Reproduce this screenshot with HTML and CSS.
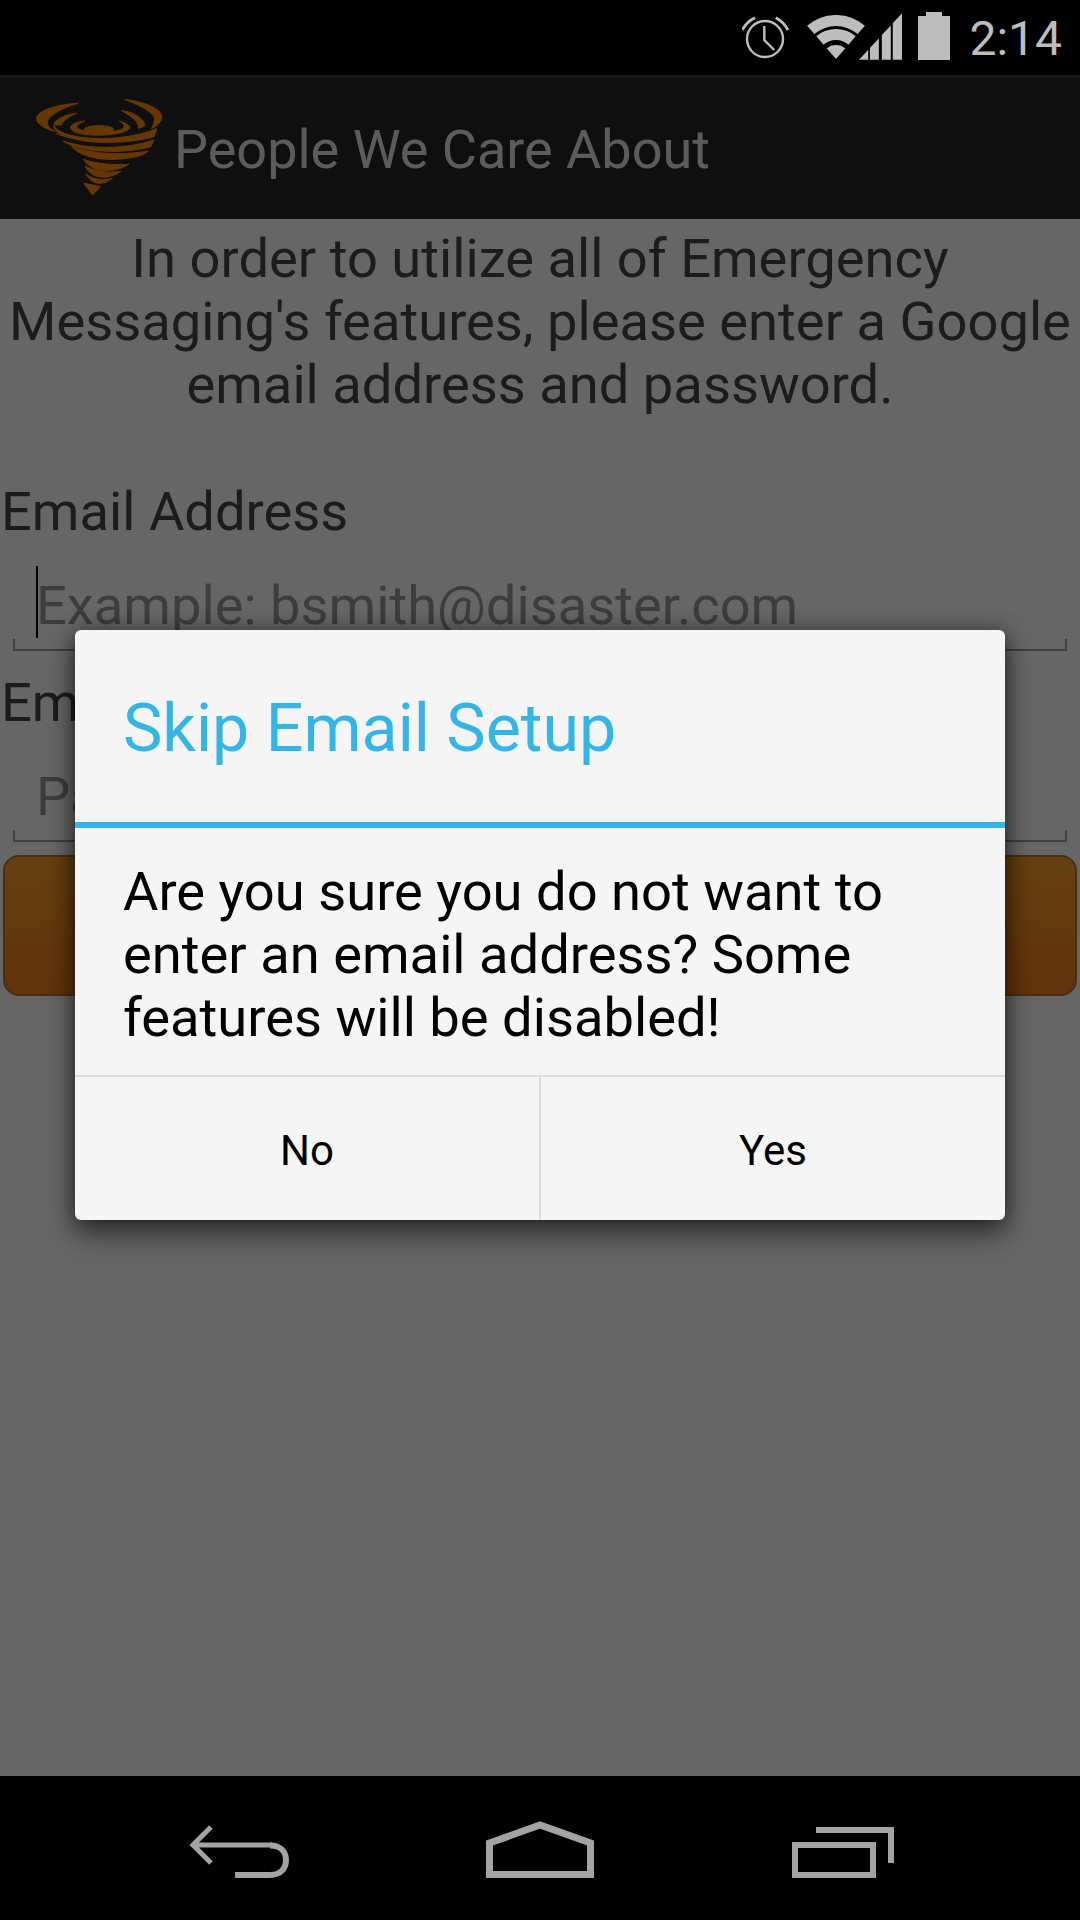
FILE: index.html
```html
<!DOCTYPE html>
<html lang="en">
<head>
<meta charset="utf-8">
<title>People We Care About</title>
<link rel="stylesheet" href="styles.css">
</head>
<body>
<div class="screen">
  <header class="status-bar">
    <svg class="ic-alarm" viewBox="0 0 48 48" width="48" height="48"><circle cx="23" cy="25" r="18" fill="none" stroke="#bdbdbd" stroke-width="2.400"/><path d="M22.300 12V26L32.300 36" fill="none" stroke="#bdbdbd" stroke-width="2.400"/><path d="M0.500 16Q4 8 13 3.700M33.700 3.700Q42 8 46 16" fill="none" stroke="#bdbdbd" stroke-width="2.800"/></svg>
    <svg class="ic-wifi" viewBox="0 0 58 44" width="58" height="44"><path fill="#bdbdbd" d="M.1 10.800A44 44 0 0 1 57.900 10.800L50.600 19.100A33 33 0 0 0 7.400 19.100ZM9.300 21.300A30 30 0 0 1 48.700 21.300L41.500 29.700A19 19 0 0 0 16.500 29.700ZM19.800 33.400A14 14 0 0 1 38.200 33.400L29 44Z"/></svg>
    <svg class="ic-signal" viewBox="0 0 43.300 46.700" width="43" height="47"><path fill="#bdbdbd" d="M0 46.700L9.300 36.700V46.700ZM11 34.900L20 25.200V46.700H11ZM23 21.900L32 12.200V46.700H23ZM34 10L43.300 0V46.700H34Z"/></svg>
    <svg class="ic-battery" viewBox="0 0 32 48" width="32" height="48"><path fill="#bdbdbd" d="M8 0H24V4H32V48H0V4H8Z"/></svg>
    <span class="clock">2:14</span>
  </header>
  <div class="app">
    <div class="action-bar">
      <svg class="logo" viewBox="0 0 420 330" width="140" height="110">
        <g fill="#ff8c00" stroke="#ff8c00" stroke-width="3">
          <path d="M145 40C90 42 22 60 20 85C20 105 50 118 75 125C60 115 52 108 52 98C52 80 90 55 145 40Z"/>
          <path d="M283 28C340 35 395 55 395 80C395 95 385 105 365 115C372 100 376 90 372 82C365 65 330 45 283 28Z"/>
          <path d="M140 70C100 75 72 90 72 105C75 125 130 145 200 145C280 148 345 135 380 115L378 125C330 145 270 150 200 150C130 150 72 130 72 112C72 105 72 105 72 105C72 105 95 105 95 105C95 95 115 80 140 70Z"/>
          <path d="M275 62C310 65 340 85 345 105C340 110 335 112 325 115C328 95 305 80 275 62Z"/>
          <path d="M165 93C135 97 120 105 122 115C125 130 170 137 215 135C260 135 295 125 300 112C298 105 285 98 268 93C280 100 285 108 280 115C265 125 225 128 195 127C165 125 140 118 140 110C142 105 150 98 165 93Z"/>
          <ellipse cx="207" cy="118" rx="44" ry="11"/>
          <path d="M80 130C130 152 260 158 380 118L372 140C300 160 200 162 150 150C125 145 100 140 80 130Z"/>
          <path d="M100 153C170 178 280 180 372 150L362 170C290 190 210 185 170 178C140 172 115 165 100 153Z"/>
          <path d="M125 170C190 195 290 195 355 183C340 200 280 210 230 208C185 205 150 195 125 170Z"/>
          <path d="M160 208C200 222 250 226 297 222C275 238 240 245 210 240C190 237 170 225 160 208Z"/>
          <path d="M165 228C195 245 240 250 273 244C255 258 225 265 205 260C185 255 172 243 165 228Z"/>
          <path d="M168 252C185 265 215 275 247 265C235 275 215 282 205 280C190 278 175 268 168 252Z"/>
          <path d="M162 280L212 290L187 315Z"/>
        </g>
      </svg>
      <span class="app-title">People We Care About</span>
    </div>
    <main class="content">
      <p class="intro">In order to utilize all of Emergency Messaging's features, please enter a Google email address and password.</p>
      <label class="field-label first">Email Address</label>
      <div class="input-line"><span class="caret"></span><span class="hint">Example: bsmith@disaster.com</span></div>
      <label class="field-label">Email Password</label>
      <div class="input-line"><span class="hint">Password</span></div>
      <div class="cta"></div>
    </main>
    <div class="scrim">
      <section class="dialog">
        <h2 class="dialog-title">Skip Email Setup</h2>
        <p class="dialog-body">Are you sure you do not want to enter an email address? Some features will be disabled!</p>
        <div class="dialog-actions">
          <button class="dialog-btn">No</button>
          <button class="dialog-btn">Yes</button>
        </div>
      </section>
    </div>
  </div>
  <nav class="nav-bar">
    <svg class="ic-back" viewBox="0 0 102 54" width="102" height="54"><path fill="none" stroke="#a3a3a3" stroke-width="5" d="M23 2L5 20L23 38M5 20H84"/><path fill="none" stroke="#a3a3a3" stroke-width="6" d="M82 20.500C93 20.500 98 27 98 35C98 43 93 50 82 50H47"/></svg>
    <svg class="ic-home" viewBox="0 0 108 57" width="108" height="57"><path fill="none" stroke="#a3a3a3" stroke-width="7" d="M3.500 22L54 4L104.500 22V53.500H3.500Z"/></svg>
    <svg class="ic-recent" viewBox="0 0 102 51" width="102" height="51"><path fill="none" stroke="#a3a3a3" stroke-width="6" d="M3 18H81V48H3ZM24 3H99V36"/></svg>
  </nav>
</div>
</body>
</html>
```
FILE: styles.css
```css
* { box-sizing: border-box; }
html, body { margin: 0; padding: 0; }
body { font-family: Roboto, "Noto Sans", sans-serif; background: #000; }
.screen { width: 1080px; height: 1920px; display: flex; flex-direction: column; overflow: hidden; }
.status-bar { height: 75px; flex: none; background: #000; display: flex; align-items: center; padding-right: 18px; justify-content: flex-end; }
.ic-alarm { margin-right: 17px; }
.ic-wifi { margin-right: -6px; margin-bottom: 2px; }
.ic-signal { margin-right: 16px; margin-bottom: 3px; }
.ic-battery { margin-right: 19px; margin-bottom: 3px; }
.clock { color: #bdbdbd; font-size: 48px; line-height: 75px; padding-top: 2px; }
.app { position: relative; flex: 1; display: flex; flex-direction: column; background: #fff; }
.action-bar { height: 144px; flex: none; background: #262626; border-top: 2px solid #444; display: flex; align-items: center; padding-left: 30px; }
.logo { flex: none; margin-top: -6px; }
.app-title { margin-left: 4px; padding-top: 2px; font-size: 54px; color: #e6e6e6; white-space: nowrap; }
.content { flex: 1; display: flex; flex-direction: column; }
.intro { margin: 0; padding-top: 8px; font-size: 54.3px; line-height: 63px; text-align: center; color: #484848; }
.field-label { display: block; font-size: 54.3px; line-height: 63px; color: #484848; padding-left: 1px; margin-top: 20px; white-space: nowrap; }
.field-label.first { margin-top: 64px; }
.input-line { position: relative; height: 108px; margin: 0 13px; border-bottom: 2px solid #a0a0a0; padding: 27px 0 0 23px; font-size: 54.3px; line-height: 72px; }
.input-line::before, .input-line::after { content: ""; position: absolute; bottom: -2px; width: 2px; height: 12px; background: #a0a0a0; }
.input-line::before { left: 0; }
.input-line::after { right: 0; }
.hint { color: #9a9a9a; white-space: nowrap; }
.caret { position: absolute; left: 23px; top: 23px; bottom: 11px; width: 2px; background: #000; }
.cta { height: 141px; margin: 13px 3px 0 3px; border-radius: 16px; border: 2px solid #a87a30; background: linear-gradient(#fca028, #f58020); }
.scrim { position: absolute; inset: 0; padding-bottom: 1px; background: rgba(0, 0, 0, 0.6); display: flex; align-items: center; justify-content: center; }
.dialog { width: 930px; background: #f5f5f5; border-radius: 6px; box-shadow: 0 14px 28px rgba(0, 0, 0, 0.5), 0 0 20px rgba(0, 0, 0, 0.4); overflow: hidden; }
.dialog-title { margin: 0; height: 198px; padding: 0 48px; font-size: 66.3px; line-height: 197px; font-weight: 400; color: #33b5e5; border-bottom: 6px solid #33b5e5; }
.dialog-body { margin: 0; padding: 32px 49px 26px 48px; font-size: 54.3px; line-height: 63px; color: #000; }
.dialog-actions { display: flex; border-top: 2px solid #dcdcdc; height: 145px; }
.dialog-btn { flex: 1; border: 0; background: none; font: inherit; font-size: 42px; color: #000; padding: 4px 0 0; }
.dialog-btn + .dialog-btn { border-left: 2px solid #dcdcdc; }
.nav-bar { height: 144px; flex: none; background: #000; display: flex; align-items: flex-start; padding-left: 188px; gap: 196px; }
.ic-back { margin-top: 49px; }
.ic-home { margin-top: 45px; }
.ic-recent { margin-top: 51px; margin-left: 2px; }
```
